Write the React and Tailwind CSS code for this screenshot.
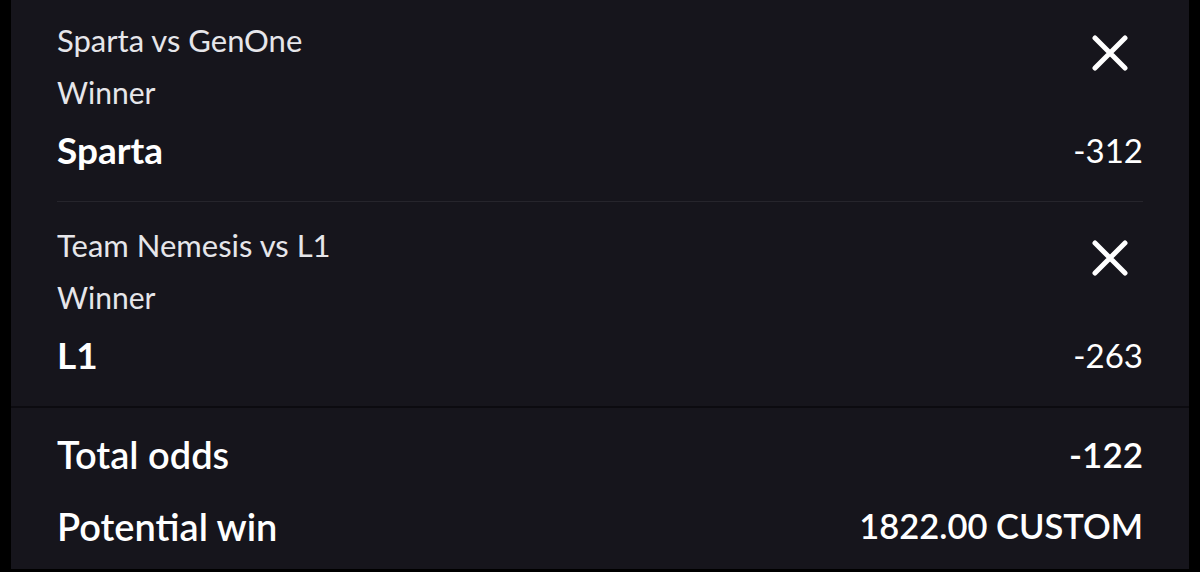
const bets = [
  { match: "Sparta vs GenOne", market: "Winner", pick: "Sparta", odds: "-312" },
  { match: "Team Nemesis vs L1", market: "Winner", pick: "L1", odds: "-263" },
];

function CloseIcon() {
  return (
    <svg width="36" height="36" viewBox="0 0 36 36" fill="none">
      <path
        d="M3 3L33 33M33 3L3 33"
        stroke="white"
        strokeWidth="5"
        strokeLinecap="round"
      />
    </svg>
  );
}

function BetRow({ bet, last }) {
  return (
    <div className="px-[46px]">
      <div className={"flex pt-[17px] pb-[20px] " + (last ? "" : "border-b border-[#26252c]")}>
        <div className="flex-1">
          <div className="h-[52px] leading-[52px] text-[31px] text-[#e6e6ea]">{bet.match}</div>
          <div className="h-[53px] leading-[53px] text-[30px] text-[#e6e6ea]">{bet.market}</div>
          <div className="h-[62px] leading-[62px] text-[37px] font-bold text-white">{bet.pick}</div>
        </div>
        <div className="flex flex-col items-end">
          <div className="h-[105px] pt-[21px] pr-[15px]">
            <button className="block">
              <CloseIcon />
            </button>
          </div>
          <div className="h-[62px] leading-[62px] text-[33px] text-white">{bet.odds}</div>
        </div>
      </div>
    </div>
  );
}

export default function App() {
  return (
    <div
      className="h-[572px] w-full overflow-hidden bg-black px-[11px]"
      style={{ fontFamily: "Lato, 'Noto Sans', sans-serif" }}
    >
      <div className="h-full bg-[#16151c]">
        <div className="-mt-[3px]">
          {bets.map((bet, i) => (
            <BetRow key={bet.match} bet={bet} last={i === bets.length - 1} />
          ))}
        </div>
        <div className="border-t-2 border-[#0c0b10] px-[46px] pt-[10px] font-semibold text-white">
          <div className="flex h-[72px] items-center justify-between">
            <span className="text-[38px]">Total odds</span>
            <span className="text-[35px]">-122</span>
          </div>
          <div className="flex h-[72px] items-center justify-between">
            <span className="text-[38px]">Potential win</span>
            <span className="text-[34.5px]">1822.00 CUSTOM</span>
          </div>
        </div>
      </div>
    </div>
  );
}
